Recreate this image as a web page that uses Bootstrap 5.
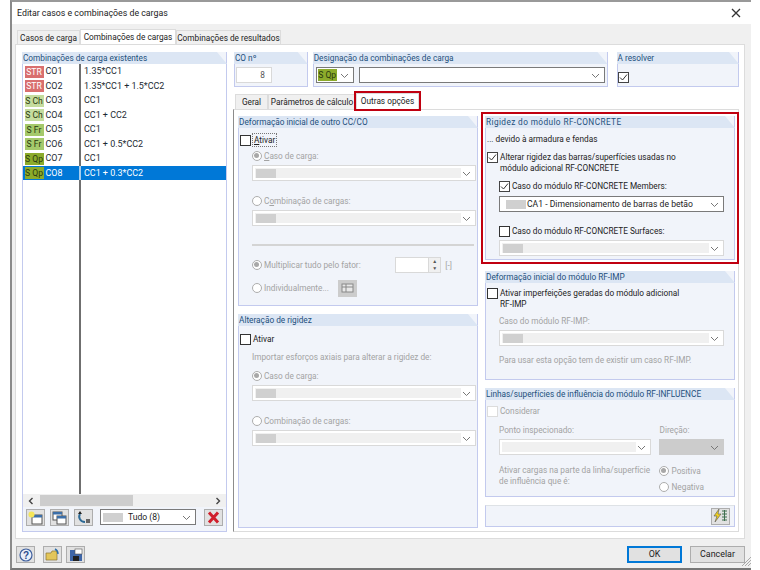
<!DOCTYPE html>
<html lang="pt">
<head>
<meta charset="utf-8">
<title>Editar casos e combinações de cargas</title>
<link href="https://cdn.jsdelivr.net/npm/bootstrap@5.3.0/dist/css/bootstrap.min.css" rel="stylesheet">
<style>
html,body{margin:0;background:#fff;}
body{font-family:Roboto,"Noto Sans",sans-serif;font-size:8.25px;line-height:12px;color:#222;}
.dlg{width:741px;height:570px;margin-left:10px;background:#f0f0f0;border-top:2px solid #999;border-left:2px solid #8a8a8a;border-bottom:2px solid #777;box-sizing:border-box;}
.ttl{height:22px;background:#fff;padding:0 10px 0 5px;font-size:8.8px;}
.wt{padding:5px 0 0 3px;height:20px;}
.wt.nav-tabs,.st.nav-tabs{border-bottom:0;flex-wrap:nowrap;}
.wt .nav-link,.st .nav-link{padding:0;height:15px;line-height:15px;border:1px solid #dcdcdc;border-bottom:0;border-radius:0;background:#f0f0f0;color:#222;font-size:8.25px;text-align:center;margin:1px 0 0 0;white-space:nowrap;}
.wt .nav-link.active,.st .nav-link.active{background:#fff;color:#222;height:16px;margin-top:0;border-color:#dcdcdc;line-height:14px;}
.t1{width:63px;margin-left:2px!important}.t2{width:96px}.t3{width:105px}
.pn{width:730px;height:495px;margin-left:3px;background:#fff;border:1px solid #dcdcdc;padding:7px 5px 0 6px;gap:6px;}
.lcol{width:206px;height:480px;}
.rcol{width:506px;}
.grp{background:#f1f4fa;border:1px solid #c3caee;border-top:0;}
.gh{height:12px;line-height:12px;background:#dce6f4;color:#1c4f7c;font-size:8.25px;padding-left:1px;margin:0 -1px;clip-path:polygon(0 0,calc(100% - 10px) 0,100% 100%,0 100%);white-space:nowrap;}
.gh.wide{letter-spacing:.4px;}
.gb{padding-left:1px;}
.lst{background:#fff;min-height:0;}
.lrow{height:14.5px;line-height:14.5px;font-size:8.95px;color:#1d2a33;}
.c1{width:58px;flex:none;border-right:2px solid #6f6f6f;padding-left:1.5px;white-space:nowrap;}
.c2{padding-left:3px;}
.lrow.sel{background:#0078d7;color:#fff;}
.lrow.sel .c1{border-right-color:#a6cdee;}
.fil{flex:1 1 auto;height:auto;}
.tg{display:inline-block;width:19px;height:12px;line-height:12px;text-align:center;font-size:8.6px;margin-right:2px;vertical-align:middle;color:#2b3b10;}
.tstr{background:#d96f6f;color:#fff;}.tch{background:#c5dc9e;}.tfr{background:#a5c96b;}.tqp{background:#8cab2b;}
.sb{height:13px;background:#f0f0f0;padding:0 5px;color:#333;}
.thumb{width:93px;height:11px;background:#cdcdcd;margin-left:6px;}
.tb{height:24px;padding:2px 3px 0 3px;gap:5px;}
.tbsel{margin:0 3px 0 2px;}
.ib.btn{width:19px;height:17px;padding:0;border:1px solid #adadad;border-radius:0;background:#e1e1e1;display:flex;align-items:center;justify-content:center;flex:none;}
.ib.off{background:#ccc;border-color:#ccc;}
.form-select.cb{--bs-form-select-bg-img:url("data:image/svg+xml,%3Csvg xmlns='http://www.w3.org/2000/svg' viewBox='0 0 9 7'%3E%3Cpath d='M1 2l3.5 3.5L8 2' fill='none' stroke='%23777' stroke-width='1'/%3E%3C/svg%3E");width:auto;height:16px;padding:0 14px 0 2px;border:1px solid #d9d9d9;border-radius:0;background-color:#fff;background-size:9px 7px;background-position:right 4px center;font-size:8.6px;line-height:14px;color:#222;display:flex;align-items:center;white-space:nowrap;box-shadow:none;}
.cb.on{border-color:#7a7a7a;}
.cb.off{background-color:#fff;padding:2px 14px 2px 2px;}
.cb.grayb{background-color:#ccc;border-color:#ccc;}
.sw{display:inline-block;width:20px;height:9px;background:#d0d0d0;margin-right:1px;flex:none;}
.cb.off .sw{margin:0;}
.cb.off .inn{flex:1;align-self:stretch;background:#f0f0f0;display:flex;align-items:center;padding-left:1px;}
.fld{width:74px;height:35px;}
.fld2{width:296px;height:35px;}
.fld3{width:123px;height:35px;}
.toprow{gap:5px;padding-left:1px;}
.in8{width:36px;height:16px;margin:3px 0 0 1px;background:#fff;border:1px solid #d9d9d9;text-align:right;padding-right:6px;line-height:14px;color:#555;}
.tqsel{width:38px;flex:none;padding-left:1px!important;}
.dsel{padding:0 2px;margin-top:3px;gap:5px;}
.st{margin-top:6px;padding-left:2px;height:16px;}
.st1{width:33px}.st2{width:88px}.st3{width:63px}
.out{outline:2px solid #c00010;outline-offset:0;position:relative;z-index:1;}
.sp{height:423px;background:#fff;border:1px solid #dcdcdc;border-left:1px solid #8c8c8c;padding:6px 0 0 4px;gap:7px;}
.lc2{width:240px;gap:8px;}
.rc2{width:250px;}
.redb{outline:2px solid #c00010;outline-offset:2px;}
.form-check{padding:0;margin:0;min-height:0;display:flex;align-items:center;gap:2px;height:12px;color:#222;white-space:nowrap;}
.form-check .form-check-input{float:none;margin:0;width:11px;height:11px;flex:none;border:1px solid #333;border-radius:0;background-color:#fff;box-shadow:none;opacity:1;}
.form-check-input:checked[type=checkbox]{background-color:#fff;border-color:#444;background-size:11px;background-image:url("data:image/svg+xml,%3Csvg xmlns='http://www.w3.org/2000/svg' viewBox='0 0 11 11'%3E%3Cpath d='M2 5.5l2.5 2.5L9 2.5' fill='none' stroke='%23333' stroke-width='1'/%3E%3C/svg%3E");}
.form-check-input[type=checkbox]:disabled{border-color:#dcdcdc;opacity:1;}
.form-check-input[type=radio]{border:1px solid #adadad!important;border-radius:50%!important;width:10px!important;height:10px!important;background-color:#fff;opacity:1!important;}
.form-check-input[type=radio]:checked{background-color:#fff;background-size:10px;background-image:url("data:image/svg+xml,%3Csvg xmlns='http://www.w3.org/2000/svg' viewBox='0 0 10 10'%3E%3Ccircle cx='4.5' cy='4.5' r='2.5' fill='%23a8a8a8'/%3E%3C/svg%3E");}
.form-check-label,.form-check-input:disabled~.form-check-label{opacity:1;}
.dis,.form-check-input:disabled~.form-check-label{color:#a3a3a3;}
.two{height:auto;align-items:flex-start;line-height:10.7px;white-space:nowrap;}
.ind{margin-left:12px;margin-right:1px;}
.ind2{margin-left:12px;margin-right:10px;}
.foc{outline:1px dotted #777;padding:0 1px;}
.mt3p{margin-top:3px}.mt4p{margin-top:4px}.mt5p{margin-top:5px}.mt6p{margin-top:6px}.mt7p{margin-top:7px}.mt8p{margin-top:8px}.mt10p{margin-top:10px}.mt11p{margin-top:11px}.mt13p{margin-top:13px}.mt14p{margin-top:14px}
.rule{height:2px;background:#d4d4d4;border:0;opacity:1;margin:18px 3px 0 12px;}
.spn{width:46px;height:16px;background:#fff;border:1px solid #d9d9d9;margin-left:auto;flex:none;}
.spb{width:12px;background:#f0f0f0;border-left:1px solid #d9d9d9;font-size:5px;line-height:7px;text-align:center;color:#555;}
.un{height:16px;}
.wind{width:105px;}
.grh1{height:190px}.grh2{height:214px}.grh3{height:144px}.grh4{height:109px}.grh5{height:22px}
.gp11{margin-top:11px}.gp8{margin-top:8px}
.wl{width:156px}.wr{width:66px}
.wg{gap:8px}
.foot{height:27px;padding:7px 6px 0 4px;position:relative;}
.ft2{gap:4px}
.ft.ib.btn{width:19px;height:17px;}
.wb.btn{width:55px;height:17px;padding:0;border:1px solid #adadad;border-radius:0;background:#e1e1e1;font-size:8.9px;line-height:15px;color:#222;}
.wb.pri{border:2px solid #0078d7;line-height:13px;}
.grip{position:absolute;right:0;bottom:0;}
</style>
</head>
<body>
<div class="dlg d-flex flex-column">
  <div class="ttl d-flex align-items-center justify-content-between">
    <span>Editar casos e combinações de cargas</span>
    <svg width="10" height="10" viewBox="0 0 10 10"><path d="M1 1l8 8M9 1l-8 8" stroke="#333" stroke-width="1.3"/></svg>
  </div>
  <ul class="nav nav-tabs wt">
    <li class="nav-item"><a class="nav-link t1" href="#">Casos de carga</a></li>
    <li class="nav-item"><a class="nav-link active t2" href="#">Combinações de cargas</a></li>
    <li class="nav-item"><a class="nav-link t3" href="#">Combinações de resultados</a></li>
  </ul>
  <div class="pn d-flex">
    <div class="lcol grp d-flex flex-column">
      <div class="gh">Combinações de carga existentes</div>
      <div class="lst flex-grow-1 d-flex flex-column">
        <div class="lrow d-flex"><div class="c1"><span class="tg tstr">STR</span>CO1</div><div class="c2">1.35*CC1</div></div>
        <div class="lrow d-flex"><div class="c1"><span class="tg tstr">STR</span>CO2</div><div class="c2">1.35*CC1 + 1.5*CC2</div></div>
        <div class="lrow d-flex"><div class="c1"><span class="tg tch">S Ch</span>CO3</div><div class="c2">CC1</div></div>
        <div class="lrow d-flex"><div class="c1"><span class="tg tch">S Ch</span>CO4</div><div class="c2">CC1 + CC2</div></div>
        <div class="lrow d-flex"><div class="c1"><span class="tg tfr">S Fr</span>CO5</div><div class="c2">CC1</div></div>
        <div class="lrow d-flex"><div class="c1"><span class="tg tfr">S Fr</span>CO6</div><div class="c2">CC1 + 0.5*CC2</div></div>
        <div class="lrow d-flex"><div class="c1"><span class="tg tqp">S Qp</span>CO7</div><div class="c2">CC1</div></div>
        <div class="lrow sel d-flex"><div class="c1"><span class="tg tqp">S Qp</span>CO8</div><div class="c2">CC1 + 0.3*CC2</div></div>
        <div class="lrow fil d-flex"><div class="c1"></div></div>
      </div>
      <div class="sb d-flex align-items-center">
        <svg width="6" height="8" viewBox="0 0 6 8"><path d="M4.5 1L1.5 4l3 3" fill="none" stroke="#444" stroke-width="1.4"/></svg>
        <div class="thumb"></div>
        <svg class="ms-auto" width="6" height="8" viewBox="0 0 6 8"><path d="M1.5 1l3 3-3 3" fill="none" stroke="#444" stroke-width="1.4"/></svg>
      </div>
      <div class="tb d-flex">
        <button class="ib btn" type="button" aria-label="Novo"><svg width="15" height="14" viewBox="0 0 15 14"><rect x="4" y="4" width="10" height="9" fill="#fff" stroke="#555"/><rect x="4" y="4" width="10" height="2.5" fill="#3d6fa8"/><circle cx="3.5" cy="3.5" r="3" fill="#f5e65a"/></svg></button>
        <button class="ib btn" type="button" aria-label="Copiar"><svg width="15" height="14" viewBox="0 0 15 14"><rect x="1" y="1" width="9" height="8" fill="#fff" stroke="#555"/><rect x="1" y="1" width="9" height="2.5" fill="#3d6fa8"/><rect x="5" y="5" width="9" height="8" fill="#fff" stroke="#555"/><rect x="5" y="5" width="9" height="2.5" fill="#3d6fa8"/></svg></button>
        <button class="ib btn" type="button" aria-label="Renumerar"><svg width="15" height="14" viewBox="0 0 15 14"><path d="M4 3C2 6 4 11 9 11" fill="none" stroke="#2c6a96" stroke-width="2"/><path d="M4 0l2 3H2z" fill="#222"/><rect x="10" y="8" width="4" height="4" fill="#666"/></svg></button>
        <div class="form-select cb on flex-grow-1 tbsel"><span class="sw"></span><span class="ms-1">Tudo (8)</span></div>
        <button class="ib btn" type="button" aria-label="Excluir"><svg width="13" height="13" viewBox="0 0 13 13"><path d="M2 1.5l9 10M11 1.5l-9 10" stroke="#d01f2c" stroke-width="3"/></svg></button>
      </div>
    </div>
    <div class="rcol">
      <div class="d-flex toprow">
        <div class="grp fld"><div class="gh">CO nº</div><div class="in8">8</div></div>
        <div class="grp fld2"><div class="gh">Designação da combinações de carga</div>
          <div class="d-flex dsel"><div class="form-select cb on tqsel"><span class="tg tqp">S Qp</span></div><div class="form-select cb on flex-grow-1"></div></div>
        </div>
        <div class="grp fld3 ms-1"><div class="gh">A resolver</div><div class="form-check mt7p"><input class="form-check-input" type="checkbox" checked aria-label="A resolver"></div></div>
      </div>
      <ul class="nav nav-tabs st">
        <li class="nav-item"><a class="nav-link st1" href="#">Geral</a></li>
        <li class="nav-item"><a class="nav-link st2" href="#">Parâmetros de cálculo</a></li>
        <li class="nav-item"><a class="nav-link active st3 out" href="#">Outras opções</a></li>
      </ul>
      <div class="sp d-flex">
        <div class="lc2 d-flex flex-column">
          <div class="grp grh1">
            <div class="gh">Deformação inicial de outro CC/CO</div>
            <div class="gb">
              <div class="form-check mt6p"><input class="form-check-input" type="checkbox" id="a1"><label class="form-check-label foc" for="a1"><u>A</u>tivar</label></div>
              <div class="form-check ind mt4p"><input class="form-check-input" type="radio" checked disabled id="r1"><label class="form-check-label" for="r1"><u>C</u>aso de carga:</label></div>
              <div class="form-select cb off ind mt3p"><span class="inn"><span class="sw"></span></span></div>
              <div class="form-check ind mt14p"><input class="form-check-input" type="radio" disabled id="r2"><label class="form-check-label" for="r2">C<u>o</u>mbinação de cargas:</label></div>
              <div class="form-select cb off ind mt3p"><span class="inn"><span class="sw"></span></span></div>
              <hr class="rule">
              <div class="d-flex align-items-center ind mt11p un">
                <div class="form-check"><input class="form-check-input" type="radio" checked disabled id="r3"><label class="form-check-label" for="r3">Multiplicar tudo pelo fator:</label></div>
                <div class="spn d-flex justify-content-end"><div class="spb">▲<br>▼</div></div>
                <span class="dis ms-1 me-4">[-]</span>
              </div>
              <div class="d-flex align-items-center justify-content-between ind mt7p un wind">
                <div class="form-check"><input class="form-check-input" type="radio" disabled id="r4"><label class="form-check-label" for="r4">Individualmente...</label></div>
                <button class="ib btn off" type="button" aria-label="Editar"><svg width="14" height="12" viewBox="0 0 14 12"><rect x="1" y="2" width="11" height="8" fill="#e8e8e8" stroke="#888"/><path d="M1 5h11M5 2v8" stroke="#888"/></svg></button>
              </div>
            </div>
          </div>
          <div class="grp grh2">
            <div class="gh">Alteração de rigidez</div>
            <div class="gb">
              <div class="form-check mt7p"><input class="form-check-input" type="checkbox" id="a2"><label class="form-check-label" for="a2">Ativar</label></div>
              <div class="dis ind mt6p">Importar esforços axiais para alterar a rigidez de:</div>
              <div class="form-check ind mt7p"><input class="form-check-input" type="radio" checked disabled id="r5"><label class="form-check-label" for="r5">Caso de carga:</label></div>
              <div class="form-select cb off ind mt3p"><span class="inn"><span class="sw"></span></span></div>
              <div class="form-check ind mt14p"><input class="form-check-input" type="radio" disabled id="r6"><label class="form-check-label" for="r6">Combinação de cargas:</label></div>
              <div class="form-select cb off ind mt3p"><span class="inn"><span class="sw"></span></span></div>
            </div>
          </div>
        </div>
        <div class="rc2 d-flex flex-column">
          <div class="grp grh3 redb">
            <div class="gh wide">Rigidez do módulo RF-CONCRETE</div>
            <div class="gb">
              <div class="mt5p">... devido à armadura e fendas</div>
              <div class="form-check two mt7p"><input class="form-check-input" type="checkbox" checked id="c1"><label class="form-check-label" for="c1">Alterar rigidez das barras/superfícies usadas no<br>módulo adicional RF-CONCRETE</label></div>
              <div class="form-check ind2 mt7p"><input class="form-check-input" type="checkbox" checked id="c2"><label class="form-check-label" for="c2">Caso do módulo RF-CONCRETE Members:</label></div>
              <div class="form-select cb on ind2 mt4p"><span class="sw ms-1"></span>CA1 - Dimensionamento de barras de betão</div>
              <div class="form-check ind2 mt13p"><input class="form-check-input" type="checkbox" id="c3"><label class="form-check-label" for="c3">Caso do módulo RF-CONCRETE Surfaces:</label></div>
              <div class="form-select cb off ind2 mt3p"><span class="inn"><span class="sw"></span></span></div>
            </div>
          </div>
          <div class="grp grh4 gp11">
            <div class="gh">Deformação inicial do módulo RF-IMP</div>
            <div class="gb">
              <div class="form-check two mt5p"><input class="form-check-input" type="checkbox" id="c4"><label class="form-check-label" for="c4">Ativar imperfeições geradas do módulo adicional<br>RF-IMP</label></div>
              <div class="dis ind2 mt6p">Caso do módulo RF-IMP:</div>
              <div class="form-select cb off ind2 mt3p"><span class="inn"><span class="sw"></span></span></div>
              <div class="dis ind2 mt8p">Para usar esta opção tem de existir um caso RF-IMP.</div>
            </div>
          </div>
          <div class="grp grh4 gp8">
            <div class="gh">Linhas/superfícies de influência do módulo RF-INFLUENCE</div>
            <div class="gb">
              <div class="form-check mt5p"><input class="form-check-input" type="checkbox" disabled id="c5"><label class="form-check-label" for="c5">Considerar</label></div>
              <div class="d-flex ind2 wg mt7p">
                <div class="wl"><div class="dis">Ponto inspecionado:</div><div class="form-select cb off mt3p"><span class="inn"></span></div></div>
                <div class="wr"><div class="dis">Direção:</div><div class="form-select cb grayb mt3p"></div></div>
              </div>
              <div class="d-flex ind2 wg mt10p">
                <div class="wl dis two">Ativar cargas na parte da linha/superfície<br>de influência que é:</div>
                <div class="wr">
                  <div class="form-check"><input class="form-check-input" type="radio" checked disabled id="r7"><label class="form-check-label" for="r7">Positiva</label></div>
                  <div class="form-check mt4p"><input class="form-check-input" type="radio" disabled id="r8"><label class="form-check-label" for="r8">Negativa</label></div>
                </div>
              </div>
            </div>
          </div>
          <div class="grp grh5 gp8 border-top d-flex justify-content-end align-items-center pe-1">
            <button class="ib btn" type="button" aria-label="Calcular"><svg width="15" height="14" viewBox="0 0 15 14"><path d="M6 0L1 7h3L2 13l6-8H5z" fill="#f0d020" stroke="#555" stroke-width=".6"/><path d="M9 2h5M9 5h5M9 8h5M9 11h5M11.5 1v11" stroke="#3f6f4f"/></svg></button>
          </div>
        </div>
      </div>
    </div>
  </div>
  <div class="foot d-flex align-items-start">
    <button class="ib btn ft" type="button" aria-label="Ajuda"><svg width="14" height="14" viewBox="0 0 14 14"><circle cx="7" cy="7" r="6" fill="#e9eef8" stroke="#3e5f9e" stroke-width="1.2"/><text x="7" y="10.5" font-size="10" font-weight="700" text-anchor="middle" fill="#2b4a8c" font-family="Liberation Sans">?</text></svg></button>
    <div class="d-flex ft2 ms-2">
      <button class="ib btn ft" type="button" aria-label="Abrir"><svg width="15" height="14" viewBox="0 0 15 14"><path d="M1 5h5l1-2h5v9H1z" fill="#e3c65a" stroke="#8a7430" stroke-width=".7"/><path d="M10 1c2 1 3 3 3 5" fill="none" stroke="#2f6fa8" stroke-width="1.4"/></svg></button>
      <button class="ib btn ft" type="button" aria-label="Salvar"><svg width="14" height="14" viewBox="0 0 14 14"><rect x="1" y="2" width="12" height="11" fill="#3f66a8"/><rect x="6" y="1" width="7" height="5" fill="#fff" stroke="#555" stroke-width=".6"/><rect x="4" y="8" width="6" height="5" fill="#222"/></svg></button>
    </div>
    <div class="ms-auto d-flex gap-2">
      <button class="wb btn pri" type="button">OK</button>
      <button class="wb btn" type="button">Cancelar</button>
    </div>
    <svg class="grip" width="10" height="10" viewBox="0 0 10 10"><path d="M10 1L1 10M10 4L4 10M10 7L7 10" stroke="#aaa"/></svg>
  </div>
</div>
<script src="https://cdn.jsdelivr.net/npm/bootstrap@5.3.0/dist/js/bootstrap.bundle.min.js"></script>
</body>
</html>
